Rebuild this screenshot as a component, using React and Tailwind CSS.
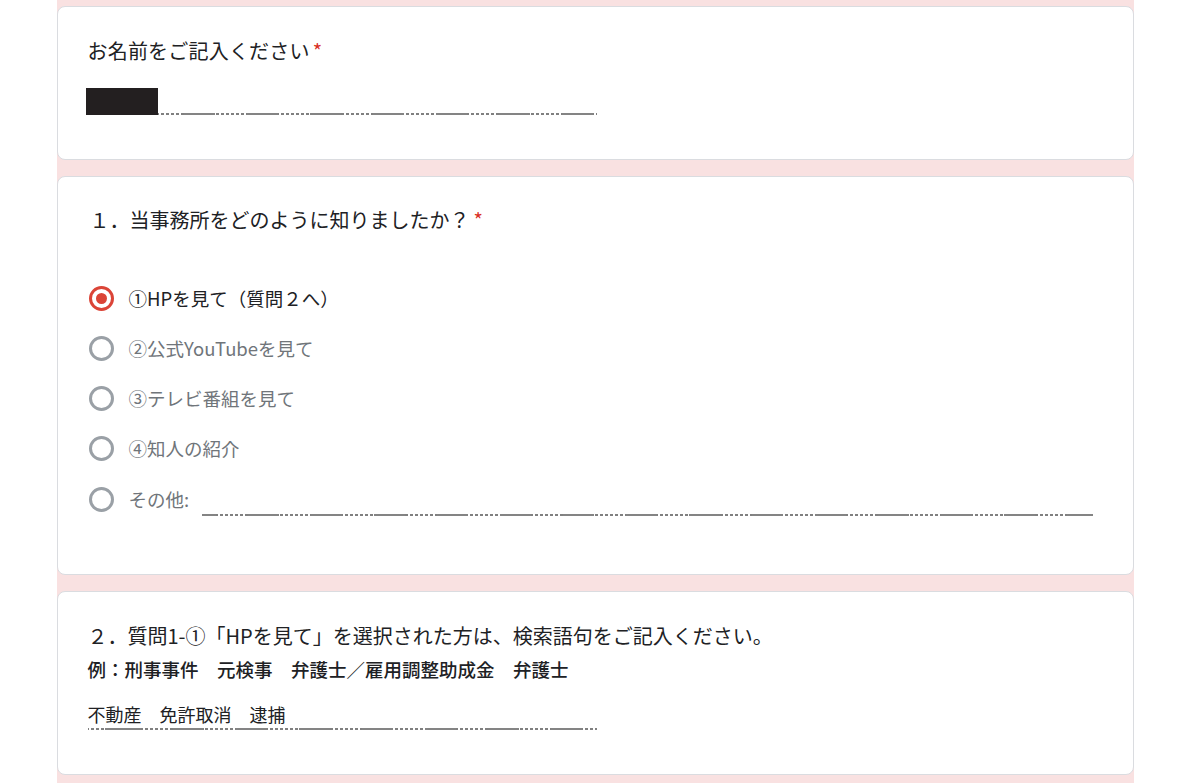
import React from "react";

const LINE =
  "h-[2px] [background-image:repeating-linear-gradient(90deg,#848484_0_31px,transparent_31px_63px),repeating-linear-gradient(90deg,#808080_0_3px,transparent_3px_5px)]";

function Dotted({ className = "" }) {
  return <div className={`${LINE} ${className}`} />;
}

function Radio({ checked }) {
  if (checked) {
    return (
      <div className="w-[25px] h-[25px] rounded-full border-[3px] border-[#db4437] flex items-center justify-center shrink-0">
        <div className="w-[11px] h-[11px] rounded-full bg-[#db4437]" />
      </div>
    );
  }
  return <div className="w-[25px] h-[25px] rounded-full border-[3px] border-[#9aa0a6] shrink-0" />;
}

function Option({ checked, label, tall }) {
  return (
    <div className={`flex items-center ${tall ? "h-[52px]" : "h-[50px]"}`}>
      <div className="ml-[1px]">
        <Radio checked={checked} />
      </div>
      <span
        className={`ml-[15px] text-[18.5px] leading-[28px] ${
          checked ? "text-[#202124]" : "text-[#70757a]"
        }`}
      >
        {label}
      </span>
    </div>
  );
}

function Card({ children, className = "" }) {
  return (
    <div
      className={`bg-white border border-[#dadce0] rounded-[8px] pl-[30px] pr-[40px] ${className}`}
    >
      {children}
    </div>
  );
}

export default function App() {
  return (
    <div className="min-h-[783px] bg-white font-['Noto_Sans_CJK_JP','Noto_Sans',sans-serif] text-[#202124]">
      <div className="w-[1077px] mx-auto bg-[#f9e1e1] pt-[6px] pb-[8px] flex flex-col gap-[16px]">
        <Card className="pt-[30px] pb-[44px]">
          <div className="text-[20px] leading-[28px] tracking-[0.2px] h-[28px]">
            お名前をご記入ください
            <span className="text-[#d93025] pl-[3px] leading-[0]">*</span>
          </div>
          <div className="relative mt-[23px] w-[509px] h-[27px] flex flex-col justify-end">
            <Dotted className="[background-position:33px_0]" />
            <div className="absolute left-[-2px] top-0 w-[72px] h-[27px] bg-[#231f20]" />
          </div>
        </Card>

        <Card className="pt-[29px] pb-[49px]">
          <div className="text-[20px] leading-[28px] pl-[2px] h-[28px]">
            １．当事務所をどのように知りましたか？
            <span className="text-[#d93025] pl-[4px] leading-[0]">*</span>
          </div>
          <div className="mt-[39px] flex flex-col">
            <Option checked label="①HPを見て（質問２へ）" />
            <Option label="②公式YouTubeを見て" />
            <Option label="③テレビ番組を見て" />
            <Option label="④知人の紹介" />
            <div className="flex items-center h-[52px]">
              <div className="ml-[1px]">
                <Radio />
              </div>
              <span className="ml-[15px] text-[18.5px] leading-[28px] text-[#70757a]">
                その他:
              </span>
              <div className="ml-[13px] flex-1 h-[34px] flex flex-col justify-end">
                <Dotted className="[background-position:-17px_0]" />
              </div>
            </div>
          </div>
        </Card>

        <Card className="pt-[30px] pb-[44px]">
          <div className="text-[20px] leading-[28px]">
            ２．質問1-①「HPを見て」を選択された方は、検索語句をご記入ください。
          </div>
          <div className="mt-[5px] text-[18.5px] leading-[28px] font-medium">
            例：刑事事件　元検事　弁護士／雇用調整助成金　弁護士
          </div>
          <div className="mt-[17px] w-[509px]">
            <div className="text-[18px] leading-[28px]">不動産　免許取消　逮捕</div>
            <Dotted className="[background-position:22px_0]" />
          </div>
        </Card>
      </div>
    </div>
  );
}
